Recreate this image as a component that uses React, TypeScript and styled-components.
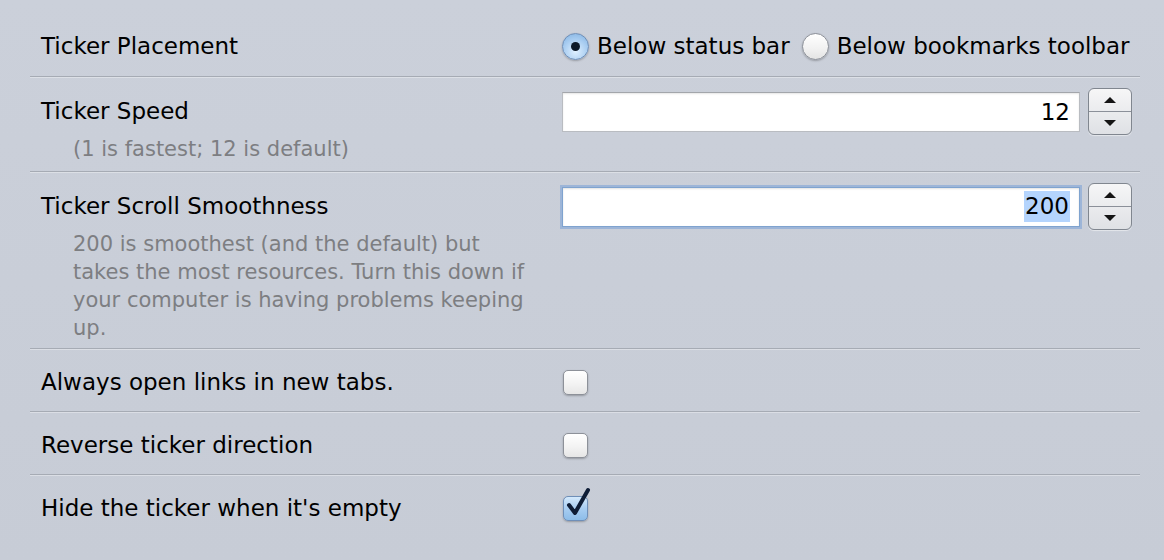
import React from "react";
import styled, {createGlobalStyle} from "styled-components";

const GlobalStyle = createGlobalStyle`
  html, body {
    margin: 0;
    padding: 0;
    background: #c9ced8;
  }
  body {
    font-family: "DejaVu Sans", "Liberation Sans", sans-serif;
    color: #000;
  }
`;

const Page = styled.div`
  width: 1164px;
  height: 560px;
  box-sizing: border-box;
  padding: 12px 24px 0 30px;
  background: linear-gradient(180deg, #cbd0da 0%, #c7ccd6 100%);
  overflow: hidden;
`;

const Row = styled.div<{ $last?: boolean; $pt?: number; $pb?: number }>`
  display: grid;
  grid-template-columns: 532px 1fr;
  align-items: start;
  padding: ${({$pt = 19}) => $pt}px 0 ${({$pb = 15}) => $pb}px;
  border-bottom: ${({$last}) => ($last ? "none" : "1px solid #a6abb4")};
  box-shadow: ${({$last}) => ($last ? "none" : "0 1px 0 rgba(255,255,255,0.35)")};
`;

const LabelCol = styled.div`
  padding-left: 11px;
`;

const Label = styled.div`
  font-size: 23px;
  line-height: 28px;
  height: 28px;
  white-space: nowrap;
`;

const Hint = styled.div`
  margin-top: 10px;
  padding-left: 32px;
  max-width: 462px;
  font-size: 21px;
  line-height: 28px;
  color: #7d7e82;
`;

const Control = styled.div`
  display: flex;
  align-items: center;
  min-height: 28px;
`;

const RadioGroup = styled.div`
  display: flex;
  align-items: center;
  gap: 12px;
  font-size: 23px;
  line-height: 28px;
  white-space: nowrap;
`;

const RadioOption = styled.label`
  display: flex;
  align-items: center;
  gap: 8px;
`;

const RadioDot = styled.span<{ $on?: boolean }>`
  width: 27px;
  height: 27px;
  box-sizing: border-box;
  border-radius: 50%;
  border: 1px solid ${({$on}) => ($on ? "#6f8fb8" : "#8d9199")};
  background: ${({$on}) =>
    $on
      ? "radial-gradient(circle at 50% 70%, #dff0ff 0%, #a9cdf1 55%, #7fb0e0 100%)"
      : "linear-gradient(180deg, #ffffff 0%, #f1f1f1 60%, #e4e4e4 100%)"};
  box-shadow: 0 1px 2px rgba(0, 0, 0, 0.25);
  display: flex;
  align-items: center;
  justify-content: center;
  &::after {
    content: "";
    width: 9px;
    height: 9px;
    border-radius: 50%;
    background: ${({$on}) => ($on ? "#0d1a2a" : "transparent")};
  }
`;

const FieldWrap = styled.div`
  display: flex;
  align-items: center;
  gap: 8px;
  margin-top: -9px;
`;

const Field = styled.div<{ $focus?: boolean }>`
  width: 518px;
  height: 40px;
  box-sizing: border-box;
  background: #fff;
  border: 1px solid ${({$focus}) => ($focus ? "#7fa3cf" : "#b9bcc1")};
  border-top-color: ${({$focus}) => ($focus ? "#7fa3cf" : "#a3a6ab")};
  box-shadow: ${({$focus}) =>
    $focus
      ? "0 0 0 2px rgba(120,160,215,0.55), inset 0 1px 2px rgba(0,0,0,0.12)"
      : "inset 0 1px 2px rgba(0,0,0,0.1)"};
  display: flex;
  align-items: center;
  justify-content: flex-end;
  padding-right: 9px;
  font-size: 23px;
`;

const Selected = styled.span`
  background: #b4d4fd;
  padding: 2px 1px 3px;
`;

const Stepper = styled.div`
  width: 44px;
  height: 47px;
  box-sizing: border-box;
  border: 1px solid #80868f;
  border-radius: 6px;
  background: linear-gradient(180deg, #f6f6f7 0%, #dfe1e5 100%);
  display: flex;
  flex-direction: column;
  overflow: hidden;
  box-shadow: 0 1px 1px rgba(255, 255, 255, 0.5);
`;

const StepHalf = styled.div<{ $down?: boolean }>`
  flex: 1;
  display: flex;
  align-items: center;
  justify-content: center;
  border-top: ${({$down}) => ($down ? "1px solid #8b9099" : "none")};
  &::after {
    content: "";
    width: 0;
    height: 0;
    border-left: 6px solid transparent;
    border-right: 6px solid transparent;
    ${({$down}) =>
      $down ? "border-top: 6px solid #151515;" : "border-bottom: 6px solid #151515;"}
  }
`;

const Box = styled.span<{ $on?: boolean }>`
  position: relative;
  width: 25px;
  height: 25px;
  margin-left: 1px;
  box-sizing: border-box;
  border-radius: 5px;
  border: 1px solid ${({$on}) => ($on ? "#6f8fb8" : "#8d9199")};
  background: ${({$on}) =>
    $on
      ? "linear-gradient(180deg, #d4e9fc 0%, #a8cdf1 50%, #8dbde9 100%)"
      : "linear-gradient(180deg, #ffffff 0%, #f3f3f3 55%, #e6e6e6 100%)"};
  box-shadow: 0 1px 2px rgba(0, 0, 0, 0.25);
`;

const Check = styled.svg`
  position: absolute;
  left: 2px;
  top: -10px;
  width: 26px;
  height: 31px;
  overflow: visible;
`;

const Checkbox = ({on = false}: { on?: boolean }) => (
  <Box $on={on}>
    {on && (
      <Check viewBox="0 0 26 31">
        <path
          d="M3 18 L9 26 L22 3"
          fill="none"
          stroke="#0f1d36"
          strokeWidth="4"
          strokeLinecap="round"
          strokeLinejoin="round"
        />
      </Check>
    )}
  </Box>
);

const NumberField = ({value, focus = false}: { value: string; focus?: boolean }) => (
  <FieldWrap>
    <Field $focus={focus}>{focus ? <Selected>{value}</Selected> : value}</Field>
    <Stepper>
      <StepHalf/>
      <StepHalf $down/>
    </Stepper>
  </FieldWrap>
);

export default function App() {
  return (
    <Page>
      <GlobalStyle/>
      <Row $pt={20} $pb={16}>
        <LabelCol>
          <Label>Ticker Placement</Label>
        </LabelCol>
        <Control>
          <RadioGroup>
            <RadioOption>
              <RadioDot $on/>
              Below status bar
            </RadioOption>
            <RadioOption>
              <RadioDot/>
              Below bookmarks toolbar
            </RadioOption>
          </RadioGroup>
        </Control>
      </Row>
      <Row $pt={20} $pb={8}>
        <LabelCol>
          <Label>Ticker Speed</Label>
          <Hint>(1 is fastest; 12 is default)</Hint>
        </LabelCol>
        <Control>
          <NumberField value="12"/>
        </Control>
      </Row>
      <Row $pt={20} $pb={6}>
        <LabelCol>
          <Label>Ticker Scroll Smoothness</Label>
          <Hint>
            200 is smoothest (and the default) but takes the most resources. Turn this down if your
            computer is having problems keeping up.
          </Hint>
        </LabelCol>
        <Control>
          <NumberField value="200" focus/>
        </Control>
      </Row>
      <Row>
        <LabelCol>
          <Label>Always open links in new tabs.</Label>
        </LabelCol>
        <Control>
          <Checkbox/>
        </Control>
      </Row>
      <Row>
        <LabelCol>
          <Label>Reverse ticker direction</Label>
        </LabelCol>
        <Control>
          <Checkbox/>
        </Control>
      </Row>
      <Row $last>
        <LabelCol>
          <Label>Hide the ticker when it's empty</Label>
        </LabelCol>
        <Control>
          <Checkbox on/>
        </Control>
      </Row>
    </Page>
  );
}
